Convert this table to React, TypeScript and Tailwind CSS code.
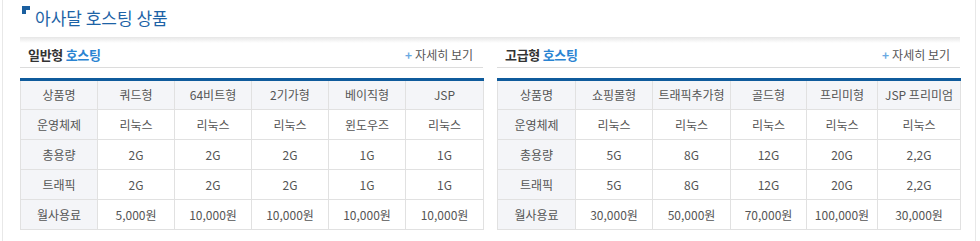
import React from 'react';

type Panel = {
  kind: string;
  widths: number[];
  rows: string[][];
};

const panels: Panel[] = [
  {
    kind: '일반형',
    widths: [77, 77, 77, 77, 77, 78],
    rows: [
      ['상품명', '쿼드형', '64비트형', '2기가형', '베이직형', 'JSP'],
      ['운영체제', '리눅스', '리눅스', '리눅스', '윈도우즈', '리눅스'],
      ['총용량', '2G', '2G', '2G', '1G', '1G'],
      ['트래픽', '2G', '2G', '2G', '1G', '1G'],
      ['월사용료', '5,000원', '10,000원', '10,000원', '10,000원', '10,000원'],
    ],
  },
  {
    kind: '고급형',
    widths: [78, 77, 78, 76, 71, 83],
    rows: [
      ['상품명', '쇼핑몰형', '트래픽추가형', '골드형', '프리미형', 'JSP 프리미엄'],
      ['운영체제', '리눅스', '리눅스', '리눅스', '리눅스', '리눅스'],
      ['총용량', '5G', '8G', '12G', '20G', '2,2G'],
      ['트래픽', '5G', '8G', '12G', '20G', '2,2G'],
      ['월사용료', '30,000원', '50,000원', '70,000원', '100,000원', '30,000원'],
    ],
  },
];

function HostingPanel({ panel }: { panel: Panel }) {
  return (
    <div className="w-[463px]">
      {/* Panel header */}
      <div className="h-[25px] flex items-center justify-between pl-[8px] pr-[10px] border-b border-[#dcdcdc]">
        <h3 className="text-[13px] font-bold tracking-[-0.3px]">
          <span className="text-[#333]">{panel.kind}</span>{' '}
          <span className="text-[#2a84d2]">호스팅</span>
        </h3>
        <span className="flex items-center gap-[3px] text-[12px] text-[#555]">
          <span className="text-[#6aa9e2] font-bold text-[12px] leading-none">+</span>
          자세히 보기
        </span>
      </div>

      {/* Product table */}
      <table className="mt-[10px] w-full table-fixed border-collapse border-t-[3px] border-t-[#0f5b9c]">
        <colgroup>
          {panel.widths.map((w, i) => (
            <col key={i} style={{ width: w }} />
          ))}
        </colgroup>
        <tbody>
          {panel.rows.map((row, r) => (
            <tr key={r}>
              {row.map((cell, c) => (
                <td
                  key={c}
                  className={`h-[30px] p-0 text-center text-[12px] text-[#555] whitespace-nowrap border border-[#e1e1e1] ${
                    r === 0 || c === 0 ? 'bg-[#f4f5f8]' : 'bg-white'
                  }`}
                >
                  {cell}
                </td>
              ))}
            </tr>
          ))}
        </tbody>
      </table>
    </div>
  );
}

export default function App() {
  return (
    <div
      className="w-[980px] h-[241px] bg-white overflow-hidden"
      style={{ fontFamily: '"Noto Sans CJK KR", "Noto Sans", sans-serif' }}
    >
      <div className="ml-[2px] w-[974px] h-full border-l border-r border-[#e8e8e8]">
        {/* Title */}
        <div className="h-[37px] flex items-start pl-[19px] pt-[6px]">
          <svg width="8" height="8" viewBox="0 0 8 8" className="mt-[0px]">
            <path d="M0 0H8V4H4V8H0Z" fill="#1b5f9f" />
          </svg>
          <h2 className="ml-[5px] mt-[1px] text-[17px] leading-[22px] text-[#1d63a6]">아사달 호스팅 상품</h2>
        </div>

        {/* Shade band */}
        <div className="ml-[17px] w-[940px] h-[6px] bg-gradient-to-b from-[#e6e6e6] to-white" />

        {/* Panels */}
        <div className="flex gap-[14px] pl-[17px]">
          {panels.map((p) => (
            <HostingPanel key={p.kind} panel={p} />
          ))}
        </div>
      </div>
    </div>
  );
}
